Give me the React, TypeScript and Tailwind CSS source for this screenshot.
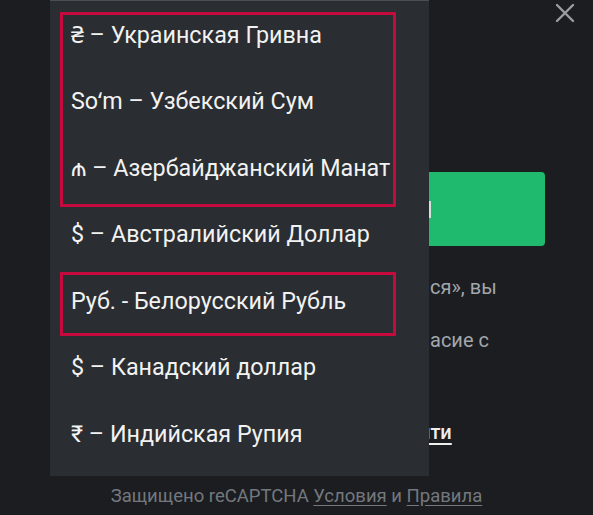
import React from "react";

const items = [
  "₴ – Украинская Гривна",
  "Soʻm – Узбекский Сум",
  "₼ – Азербайджанский Манат",
  "$ – Австралийский Доллар",
  "Руб. - Белорусский Рубль",
  "$ – Канадский доллар",
  "₹ – Индийская Рупия",
];

export default function App() {
  return (
    <div
      className="relative w-[593px] h-[515px] overflow-hidden bg-[#1b1d20]"
      style={{ fontFamily: "Roboto, 'Noto Sans', 'DejaVu Sans', sans-serif" }}
    >
      {/* background modal */}
      <div className="flex flex-col pl-[50px] pr-[48px]">
        <div className="flex justify-end pt-[3px] mr-[-30px]">
          <svg width="20" height="20" viewBox="0 0 20 20">
            <path d="M2 2 L18 18 M18 2 L2 18" stroke="#9a9ea3" strokeWidth="2.4" strokeLinecap="round" />
          </svg>
        </div>
        <div className="mt-[149px] h-[74px] rounded-[4px] bg-[#1fba6e] flex items-center pl-[379px]">
          <div className="w-[2px] h-[17px] bg-[#cfe3d8]" />
        </div>
        <div className="mt-[29px] pl-[380px] text-[20px] leading-[24px] text-[#a3a7ac]">ся», вы</div>
        <div className="mt-[29px] pl-[380px] text-[20px] leading-[24px] text-[#a3a7ac]">асие с</div>
        <div className="mt-[68px] pl-[369px] text-[20px] leading-[24px] text-[#eeeeee] font-medium">
          <span className="underline underline-offset-[4px]">йти</span>
        </div>
      </div>
      <div className="mt-[41px] text-center text-[18.5px] leading-[22px] text-[#74787e]">
        Защищено reCAPTCHA <span className="underline underline-offset-[3px]">Условия</span> и{" "}
        <span className="underline underline-offset-[3px]">Правила</span>
      </div>

      {/* dropdown menu overlay */}
      <div className="absolute left-[50px] top-0 w-[379px] h-[476px] bg-[#2a2d31] border-t border-[#4b4f55]">
        <ul className="flex flex-col pt-[1px]">
          {items.map((t) => (
            <li
              key={t}
              className="h-[66.5px] flex items-center pl-[21px] text-[23.3px] text-[#f2f2f2] whitespace-nowrap"
            >
              {t}
            </li>
          ))}
        </ul>
        <div className="absolute left-[10px] top-[11px] w-[336px] h-[195px] border-[3px] border-[#c50b3d]" />
        <div className="absolute left-[10px] top-[271px] w-[336px] h-[64px] border-[3px] border-[#c50b3d]" />
      </div>
    </div>
  );
}
